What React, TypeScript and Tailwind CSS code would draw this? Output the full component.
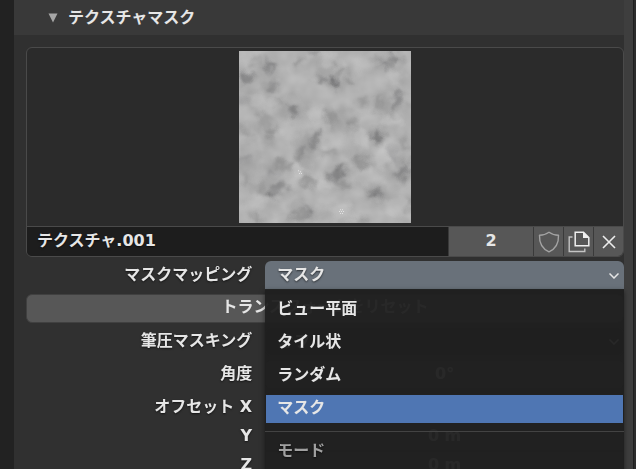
import React from "react";

const darkSpots = [
  [48, 110, 26, 14, 0.3], [120, 82, 13, 13, 0.3], [80, 65, 14, 14, 0.12], [126, 136, 18, 12, 0.24],
  [252, 40, 20, 9, 0.25], [205, 72, 15, 14, 0.2], [312, 122, 12, 14, 0.55], [276, 121, 15, 10, 0.3],
  [325, 92, 9, 14, 0.22], [362, 125, 13, 14, 0.2], [494, 54, 13, 13, 0.32], [465, 72, 18, 13, 0.25],
  [190, 211, 14, 20, 0.35], [142, 188, 17, 11, 0.16], [502, 176, 18, 18, 0.28], [486, 200, 12, 15, 0.24],
  [448, 188, 14, 24, 0.16], [402, 190, 13, 14, 0.17], [304, 232, 12, 26, 0.18], [360, 247, 14, 14, 0.2],
  [262, 286, 9, 17, 0.36], [249, 311, 11, 17, 0.34], [215, 332, 10, 17, 0.28], [202, 352, 14, 12, 0.17],
  [120, 276, 16, 13, 0.22], [105, 240, 12, 22, 0.12], [40, 274, 18, 13, 0.16], [444, 290, 14, 16, 0.42],
  [390, 362, 23, 15, 0.22], [295, 338, 20, 11, 0.15], [332, 390, 17, 12, 0.38], [314, 410, 17, 14, 0.3],
  [344, 436, 20, 12, 0.2], [523, 388, 16, 17, 0.3], [507, 408, 13, 15, 0.28], [525, 312, 17, 12, 0.16],
  [122, 461, 12, 12, 0.45], [150, 444, 23, 13, 0.25], [92, 440, 14, 16, 0.17], [50, 430, 14, 22, 0.15],
  [440, 464, 19, 15, 0.35], [235, 425, 25, 13, 0.22], [236, 516, 12, 20, 0.27], [200, 524, 27, 13, 0.18],
  [78, 536, 16, 13, 0.2], [160, 375, 25, 12, 0.16], [122, 403, 14, 13, 0.14], [390, 543, 22, 9, 0.2],
  [45, 355, 15, 14, 0.14], [490, 342, 14, 30, 0.13], [543, 500, 12, 25, 0.12], [35, 180, 14, 14, 0.13],
];

const shades = [
  [60, 130, 45, 32], [120, 100, 34, 45], [480, 70, 50, 32], [310, 110, 52, 36], [190, 205, 40, 40],
  [480, 190, 55, 42], [340, 240, 52, 32], [235, 320, 46, 46], [110, 265, 38, 46], [330, 410, 48, 40],
  [125, 450, 58, 30], [440, 460, 42, 32], [225, 515, 50, 30], [515, 400, 38, 42], [390, 365, 40, 26],
  [50, 360, 36, 60], [150, 385, 45, 26], [444, 290, 26, 30],
];

const lightSpots = [
  [85, 182, 26, 22, 0.2], [260, 225, 24, 24, 0.24], [480, 242, 26, 20, 0.24], [392, 292, 28, 28, 0.24],
  [452, 353, 22, 32, 0.26], [208, 392, 22, 22, 0.3], [284, 432, 24, 22, 0.22], [335, 512, 36, 24, 0.26],
  [497, 108, 26, 26, 0.2], [300, 55, 32, 20, 0.18], [180, 268, 34, 32, 0.12], [75, 488, 28, 20, 0.18],
  [320, 310, 36, 24, 0.12], [400, 410, 30, 28, 0.14], [45, 60, 20, 22, 0.15], [500, 500, 30, 28, 0.15],
  [155, 535, 28, 14, 0.12], [400, 70, 34, 25, 0.08],
];

function CloudsTexture() {
  return (
    <svg viewBox="27 33 516 516" className="size-[172px]" role="img" aria-label="Clouds">
      <defs>
        <filter id="soften" x="-10%" y="-10%" width="120%" height="120%" colorInterpolationFilters="sRGB">
          <feTurbulence type="fractalNoise" baseFrequency="0.03" numOctaves="2" seed="3" result="warp" />
          <feGaussianBlur in="SourceGraphic" stdDeviation="8" result="soft" />
          <feDisplacementMap in="soft" in2="warp" scale="45" xChannelSelector="R" yChannelSelector="G" />
          <feGaussianBlur stdDeviation="2" />
        </filter>
        <filter id="clouds" x="0" y="0" width="100%" height="100%" colorInterpolationFilters="sRGB">
          <feTurbulence type="fractalNoise" baseFrequency="0.02" numOctaves="2" seed="8" />
          <feColorMatrix values="0.5 0 0 0 0.43  0.5 0 0 0 0.43  0.5 0 0 0 0.43  0 0 0 0 1" />
        </filter>
      </defs>
      <rect x="27" y="33" width="516" height="516" fill="#b5b5b5" />
      <rect x="27" y="33" width="516" height="516" filter="url(#clouds)" opacity="0.25" />
      <g filter="url(#soften)">
        {shades.map(([x, y, rx, ry]) => (
          <ellipse key={`${x}-${y}`} cx={x} cy={y} rx={rx} ry={ry} fill="#606062" opacity="0.11" />
        ))}
        {lightSpots.map(([x, y, rx, ry, o]) => (
          <ellipse key={`${x}-${y}`} cx={x} cy={y} rx={rx} ry={ry} fill="#d0d0d0" opacity={o * 1.6} />
        ))}
        {darkSpots.map(([x, y, rx, ry, o]) => (
          <ellipse key={`${x}-${y}`} cx={x} cy={y} rx={rx} ry={ry} fill="#505052" opacity={o * 1.3} />
        ))}
      </g>
      <g fill="#e2e2e2">
        <path d="M204 391h3v3h-3zM210 394h3v3h-3zM207 399h3v3h-3zM213 399h3v3h-3z" />
        <path d="M330 508h3v3h-3zM336 508h3v3h-3zM327 513h3v3h-3zM333 513h3v3h-3zM339 513h3v3h-3zM330 519h3v3h-3zM336 519h3v3h-3z" />
      </g>
    </svg>
  );
}

function Chevron() {
  return (
    <svg viewBox="0 0 10 6" className="pointer-events-none absolute top-3 right-[5px] h-[6px] w-[10px]" fill="none" stroke="#e6e6e6" strokeWidth="1.5">
      <path d="M0.5 0.5 5 5 9.5 0.5" />
    </svg>
  );
}

function ShieldIcon() {
  return (
    <svg viewBox="0 0 22 22" className="size-[22px]" fill="none" stroke="#a3a3a3" strokeWidth="1.4" strokeLinejoin="round">
      <path d="M11 1.2C8.3 3.2 5.2 4.2 1.5 4.2C1.2 11.5 3.8 17.5 11 20.8C18.2 17.5 20.8 11.5 20.5 4.2C16.8 4.2 13.7 3.2 11 1.2Z" />
    </svg>
  );
}

function DuplicateIcon() {
  return (
    <svg viewBox="0 0 22 22" className="size-[22px]" fill="none">
      <path d="M4.5 6H1.2V20.5H16.8V17.5" stroke="#c4c4c4" strokeWidth="1.4" />
      <path d="M7.2 1.2H15.5L20.8 6.5V14.8H7.2Z" stroke="#f0f0f0" strokeWidth="1.5" />
      <path d="M15 1 21 7H15Z" fill="#f0f0f0" />
    </svg>
  );
}

function CloseIcon() {
  return (
    <svg viewBox="0 0 22 22" className="size-[22px]" fill="none" stroke="#ececec" strokeWidth="1.6">
      <path d="M5 5 17 17M17 5 5 17" />
    </svg>
  );
}

function Row({ id, label, children }: { id: string; label: string; children: React.ReactNode }) {
  return (
    <div className="flex h-[29px] items-stretch">
      <label htmlFor={id} className="w-[40%] shrink-0 pr-[13px] text-right leading-7 whitespace-nowrap">
        {label}
      </label>
      <div className="relative min-w-0 flex-1">{children}</div>
    </div>
  );
}

const fieldClass =
  "block h-full w-full appearance-none border border-[#3d3d3d] bg-[#545454] pb-[2px] text-center font-bold outline-none";
const shadow = "[text-shadow:0_1px_2px_rgba(0,0,0,0.6)]";

function Menu() {
  const options = ["ビュー平面", "タイル状", "ランダム", "マスク"];
  return (
    <div className="absolute top-full right-0 left-0 z-10 -mt-px h-[260px] bg-[#1f1f1ff4] pt-[7px] shadow-[0_2px_5px_rgba(0,0,0,0.5)]">
      <ul role="listbox" aria-label="マスクマッピング" className="flex flex-col gap-[5px] px-px">
        {options.map((name) => (
          <li key={name} role="option" aria-selected={name === "マスク"}>
            <button
              type="button"
              className={`block h-7 w-full pb-[3px] pl-[11px] text-left leading-6 ${name === "マスク" ? "bg-[#4f76b3]" : ""}`}
            >
              {name}
            </button>
          </li>
        ))}
      </ul>
      <div className="mt-2 border-t border-[#434343] pt-[6px] pl-3 leading-[26px] text-[#a0a0a0]">モード</div>
    </div>
  );
}

export default function App() {
  return (
    <div
      className={`flex h-screen overflow-hidden bg-[#222222] pl-[14px] font-['DejaVu_Sans','Noto_Sans_CJK_JP',sans-serif] text-base font-bold text-[#e6e6e6] ${shadow}`}
    >
      <main className="min-w-0 flex-1 bg-[#303030]">
        <h2 className="h-[35px] bg-[#393939]">
          <button type="button" aria-expanded="true" className="flex h-full w-full items-center gap-[10px] pl-[34px]">
            <svg viewBox="0 0 10 10" className="size-[10px]" fill="#a6a6a6">
              <path d="M0.5 0.5H9.5L5 9.5Z" />
            </svg>
            <span className="leading-6">テクスチャマスク</span>
          </button>
        </h2>

        <div className="flex flex-col gap-1 pt-3 pl-3">
          <section className="overflow-hidden rounded-md border border-[#4a4a4a] bg-[#2b2b2b]">
            <div className="flex justify-center pt-[3px] pb-[3px]">
              <CloudsTexture />
            </div>
            <div className="flex h-[30px] border-t border-[#4a4a4a]">
              <input
                aria-label="テクスチャ"
                defaultValue="テクスチャ.001"
                className={`min-w-0 flex-1 bg-[#1d1d1d] pb-px pl-[10px] font-bold outline-none ${shadow}`}
              />
              <div className="flex gap-px bg-[#3a3a3a] pl-px">
                <button type="button" className="w-[84px] bg-[#575757] pb-px">2</button>
                <button type="button" aria-label="フェイクユーザー" className="flex w-[29px] items-center justify-center bg-[#575757]">
                  <ShieldIcon />
                </button>
                <button type="button" aria-label="複製" className="flex w-[29px] items-center justify-center bg-[#575757]">
                  <DuplicateIcon />
                </button>
                <button type="button" aria-label="リンク解除" className="flex w-[29px] items-center justify-center bg-[#575757]">
                  <CloseIcon />
                </button>
              </div>
            </div>
          </section>

          <Row id="mapping" label="マスクマッピング">
            <select
              id="mapping"
              defaultValue="マスク"
              className={`block h-full w-full appearance-none rounded-t-md bg-[#69717a] pb-px pl-3 font-bold outline-none ${shadow}`}
            >
              <option>ビュー平面</option>
              <option>タイル状</option>
              <option>ランダム</option>
              <option>マスク</option>
            </select>
            <Chevron />
            <Menu />
          </Row>

          <button type="button" className="h-[29px] rounded-md border border-[#404040] bg-[#575757] pb-[3px] leading-6">
            トランスフォームをリセット
          </button>

          <Row id="pressure" label="筆圧マスキング">
            <select id="pressure" className="block h-full w-full appearance-none rounded-md border border-[#3d3d3d] bg-[#282828] pl-3 font-bold outline-none">
              <option>オフ</option>
            </select>
            <Chevron />
          </Row>

          <Row id="angle" label="角度">
            <input id="angle" defaultValue="0°" className={`${fieldClass} rounded-md`} />
          </Row>

          <div>
            <Row id="offset-x" label="オフセット X">
              <input id="offset-x" defaultValue="0 m" className={`${fieldClass} rounded-t-md`} />
            </Row>
            <Row id="offset-y" label="Y">
              <input id="offset-y" defaultValue="0 m" className={fieldClass} />
            </Row>
            <Row id="offset-z" label="Z">
              <input id="offset-z" defaultValue="0 m" className={`${fieldClass} rounded-b-md`} />
            </Row>
          </div>
        </div>
      </main>
      <div className="w-[9px] shrink-0 bg-[#3e3e3e]" />
      <div className="w-[3px] shrink-0 border-l border-[#1f1f1f] bg-[#2c2c2c]" />
    </div>
  );
}
